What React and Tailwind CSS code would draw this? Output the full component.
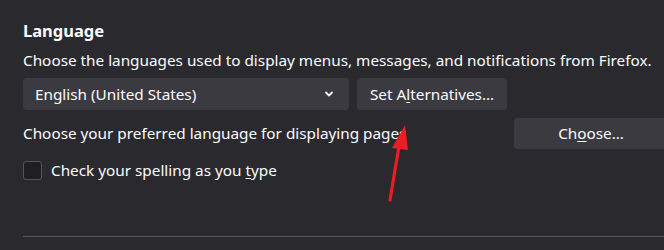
export default function App() {
  return (
    <div
      className="relative w-[664px] h-[250px] overflow-hidden bg-[#2a2a2e] text-[#fbfbfe]"
      style={{ fontFamily: '"Noto Sans", "Open Sans", sans-serif' }}
    >
      <div className="pl-[23px] pt-[19px]">
        <h2 className="text-[16.5px] font-bold leading-[24px]">Language</h2>
        <p className="mt-[6px] text-[15.3px] leading-[22px] whitespace-nowrap">
          Choose the languages used to display menus, messages, and notifications from Firefox.
        </p>

        <div className="mt-[7px] flex gap-[8px]">
          <button className="flex items-center justify-between w-[326px] h-[32px] rounded-[4px] bg-[#3b3a40] pl-[12px] pr-[15px] text-[15.3px]">
            <span>English (United States)</span>
            <svg width="10" height="10" viewBox="0 0 10 10" fill="none">
              <path d="M2 3.5 L5 6.5 L8 3.5" stroke="#fbfbfe" strokeWidth="1.8" strokeLinecap="round" strokeLinejoin="round" />
            </svg>
          </button>
          <button className="h-[32px] w-[150px] rounded-[4px] bg-[#3b3a40] text-[15.3px]">
            Set A<span className="underline underline-offset-2">l</span>ternatives…
          </button>
        </div>

        <div className="mt-[8px] flex items-center justify-between">
          <span className="text-[15.3px] whitespace-nowrap">Choose your preferred language for displaying pages</span>
          <button className="h-[31px] w-[154px] -mr-[4px] rounded-l-[4px] bg-[#3b3a40] text-[15.3px]">
            Ch<span className="underline underline-offset-2">o</span>ose…
          </button>
        </div>

        <label className="mt-[10px] flex items-center gap-[9px]">
          <span className="w-[19px] h-[19px] rounded-[3px] border border-[#55545a] bg-[#1f1e23]" />
          <span className="text-[15.3px]">
            Check your spelling as you <span className="underline underline-offset-2">t</span>ype
          </span>
        </label>

        <div className="mt-[54px] h-px bg-[#58575c]" />
      </div>

      <svg className="absolute left-0 top-0" width="664" height="250" viewBox="0 0 664 250">
        <line x1="390" y1="200" x2="400" y2="140" stroke="#ec1c24" strokeWidth="3.2" strokeLinecap="round" />
        <polygon points="405,125 392,148 408,150" fill="#ec1c24" />
      </svg>
    </div>
  );
}
